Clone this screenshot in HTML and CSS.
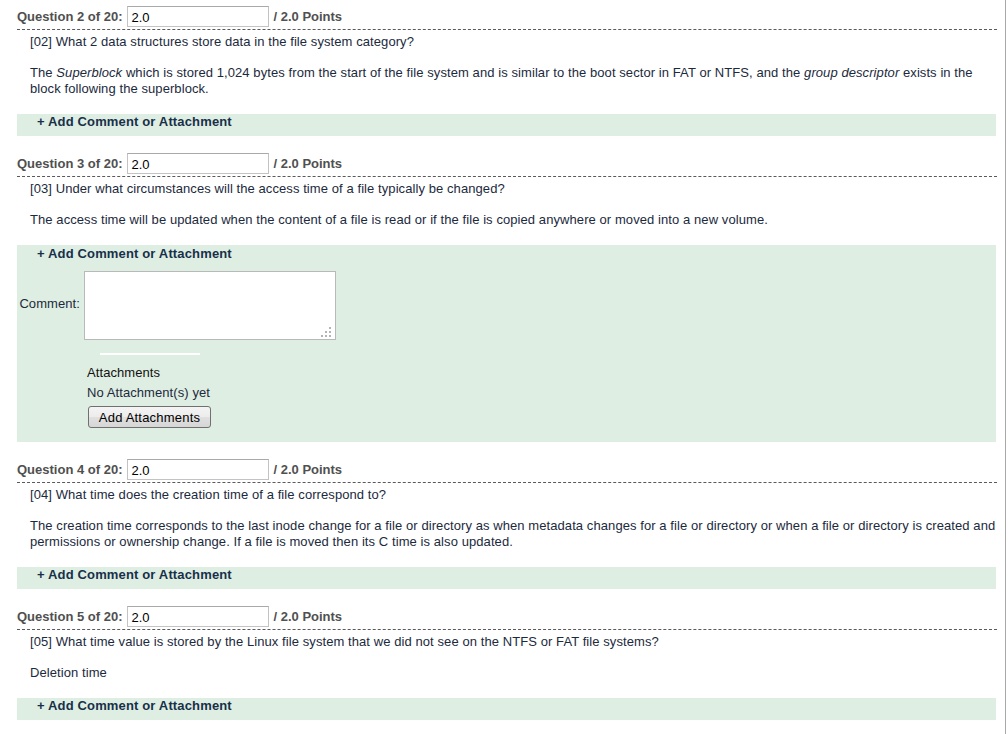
FILE: index.html
```html
<!DOCTYPE html>
<html>
<head>
<meta charset="utf-8">
<link rel="stylesheet" href="styles.css">
</head>
<body>
<div class="page">

  <div class="question">
    <div class="q-head">
      <span class="q-label">Question 2 of 20:</span>
      <input class="q-score" type="text" value="2.0">
      <span class="q-points">/ 2.0 Points</span>
    </div>
    <div class="q-text">[02] What 2 data structures store data in the file system category?</div>
    <div class="q-answer">The <em>Superblock</em> which is stored 1,024 bytes from the start of the file system and is similar to the boot sector in FAT or NTFS, and the <em>group descriptor</em> exists in the block following the superblock.</div>
    <div class="comment-bar"><span class="add-link">+ Add Comment or Attachment</span></div>
  </div>

  <div class="question">
    <div class="q-head">
      <span class="q-label">Question 3 of 20:</span>
      <input class="q-score" type="text" value="2.0">
      <span class="q-points">/ 2.0 Points</span>
    </div>
    <div class="q-text">[03] Under what circumstances will the access time of a file typically be changed?</div>
    <div class="q-answer">The access time will be updated when the content of a file is read or if the file is copied anywhere or moved into a new volume.</div>
    <div class="comment-bar open">
      <span class="add-link">+ Add Comment or Attachment</span>
      <div class="comment-row">
        <label class="comment-label">Comment:</label>
        <div class="comment-wrap">
          <textarea class="comment-box"></textarea>
          <svg class="grip" width="10" height="10" viewBox="0 0 10 10">
            <rect x="8" y="0" width="2" height="2" fill="#b4b4b4"/>
            <rect x="4" y="4" width="2" height="2" fill="#b4b4b4"/>
            <rect x="8" y="4" width="2" height="2" fill="#b4b4b4"/>
            <rect x="0" y="8" width="2" height="2" fill="#b4b4b4"/>
            <rect x="4" y="8" width="2" height="2" fill="#b4b4b4"/>
            <rect x="8" y="8" width="2" height="2" fill="#b4b4b4"/>
          </svg>
        </div>
      </div>
      <div class="attach">
        <div class="attach-rule"></div>
        <div class="attach-title">Attachments</div>
        <div class="attach-none">No Attachment(s) yet</div>
        <button class="attach-btn" type="button">Add Attachments</button>
      </div>
    </div>
  </div>

  <div class="question">
    <div class="q-head">
      <span class="q-label">Question 4 of 20:</span>
      <input class="q-score" type="text" value="2.0">
      <span class="q-points">/ 2.0 Points</span>
    </div>
    <div class="q-text">[04] What time does the creation time of a file correspond to?</div>
    <div class="q-answer">The creation time corresponds to the last inode change for a file or directory as when metadata changes for a file or directory or when a file or directory is created and permissions or ownership change. If a file is moved then its C time is also updated.</div>
    <div class="comment-bar"><span class="add-link">+ Add Comment or Attachment</span></div>
  </div>

  <div class="question">
    <div class="q-head">
      <span class="q-label">Question 5 of 20:</span>
      <input class="q-score" type="text" value="2.0">
      <span class="q-points">/ 2.0 Points</span>
    </div>
    <div class="q-text">[05] What time value is stored by the Linux file system that we did not see on the NTFS or FAT file systems?</div>
    <div class="q-answer">Deletion time</div>
    <div class="comment-bar"><span class="add-link">+ Add Comment or Attachment</span></div>
  </div>

</div>
</body>
</html>
```

FILE: styles.css
```css
html, body {
  margin: 0;
  padding: 0;
  background: #ffffff;
}

body {
  font-family: "Liberation Sans", Arial, sans-serif;
  font-size: 13px;
  line-height: 16px;
  color: #1b2a3d;
}

.page {
  width: 1006px;
  min-height: 734px;
  box-sizing: border-box;
  border-right: 1px solid #a8a8a8;
  padding-top: 5px;
}

.question {
  margin: 0 8px 16px 17px;
}

.q-head {
  display: flex;
  align-items: center;
  padding: 1px 0 2px;
  border-bottom: 1px dashed #5a5a5a;
  font-weight: bold;
  color: #505050;
}

.q-label {
  margin-right: 5px;
}

.q-score {
  width: 142px;
  height: 21px;
  box-sizing: border-box;
  margin: 0 4px 0 0;
  padding: 1px 3px 0;
  border: 1px solid #c3c3c3;
  border-top-color: #a9a9a9;
  font-family: "Liberation Sans", Arial, sans-serif;
  font-size: 13px;
  color: #000;
  background: #fff;
  outline: none;
}

.q-points {
  color: #505050;
}

.q-text {
  margin: 4px 0 0 13px;
  letter-spacing: 0.08px;
}

.q-answer {
  margin: 15px 0 0 13px;
  letter-spacing: 0.08px;
}

.comment-bar {
  margin: 17px 1px 0 0;
  background: #dfeee2;
  padding: 0 0 7px;
  line-height: 15px;
}

.add-link {
  display: block;
  padding-left: 20px;
  font-weight: bold;
  color: #17304a;
  letter-spacing: 0.15px;
}

.comment-bar.open {
  padding: 1px 0 14px;
}

.comment-bar.open .add-link {
  line-height: 16px;
}

.comment-row {
  display: flex;
  align-items: flex-start;
  margin-top: 9px;
}

.comment-label {
  width: 63px;
  margin: 25px 4px 0 0;
  text-align: right;
  color: #1b2a3d;
  letter-spacing: 0.08px;
}

.comment-wrap {
  position: relative;
  width: 252px;
  height: 69px;
}

.comment-box {
  display: block;
  width: 252px;
  height: 69px;
  box-sizing: border-box;
  margin: 0;
  border: 1px solid #b9b9b9;
  background: #fff;
  resize: none;
  font-family: "Liberation Sans", Arial, sans-serif;
  font-size: 13px;
}

.grip {
  position: absolute;
  right: 5px;
  bottom: 3px;
}

.attach {
  margin: 13px 0 0 70px;
  letter-spacing: 0.08px;
}

.attach-rule {
  width: 100px;
  height: 2px;
  background: #ffffff;
  margin-left: 13px;
}

.attach-title {
  margin-top: 8px;
  line-height: 20px;
  color: #111;
}

.attach-none {
  line-height: 20px;
  color: #1b2a3d;
}

.attach-btn {
  margin: 3px 0 0 1px;
  width: 123px;
  height: 22px;
  padding: 0;
  border: 1px solid #707070;
  border-radius: 3px;
  background: linear-gradient(#f4f4f4 0%, #ececec 50%, #e0e0e0 51%, #d6d6d6 100%);
  font-family: "Liberation Sans", Arial, sans-serif;
  font-size: 13px;
  letter-spacing: 0.2px;
  color: #000;
}
```
